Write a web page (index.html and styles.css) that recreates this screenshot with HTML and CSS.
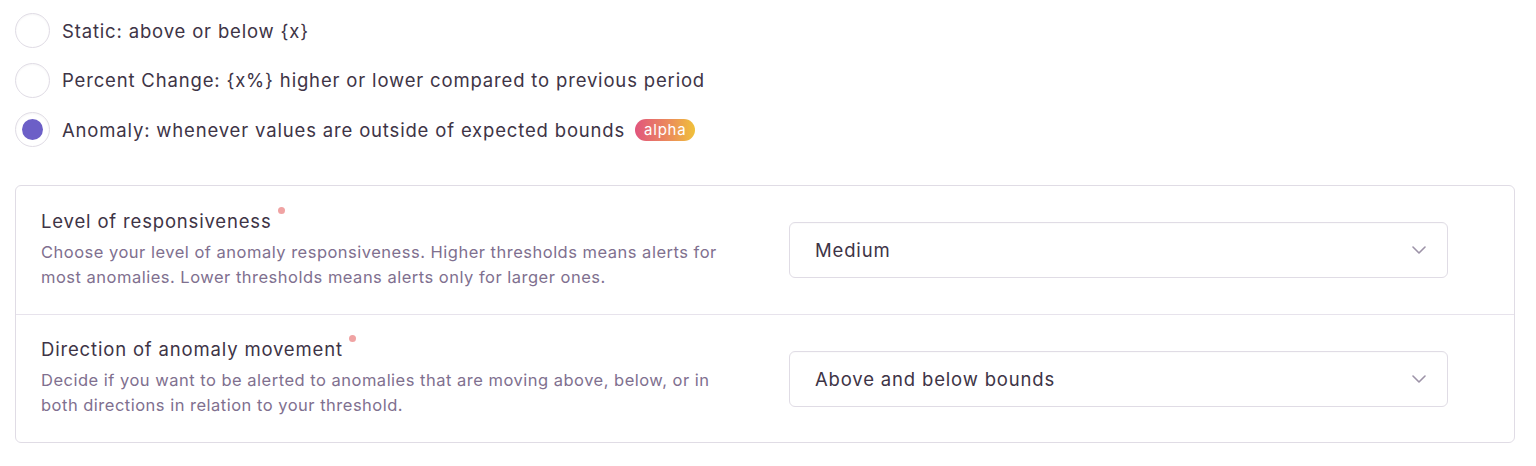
FILE: index.html
```html
<!DOCTYPE html>
<html>
<head>
<meta charset="utf-8">
<link rel="stylesheet" href="styles.css">
</head>
<body>
<div class="page">
  <div class="radios">
    <label class="radio-row">
      <span class="radio"></span>
      <span class="radio-label">Static: above or below {x}</span>
    </label>
    <label class="radio-row">
      <span class="radio"></span>
      <span class="radio-label">Percent Change: {x%} higher or lower compared to previous period</span>
    </label>
    <label class="radio-row">
      <span class="radio checked"><span class="dot"></span></span>
      <span class="radio-label">Anomaly: whenever values are outside of expected bounds</span>
      <span class="badge">alpha</span>
    </label>
  </div>

  <div class="panel">
    <div class="field">
      <div class="field-text">
        <div class="field-label">Level of responsiveness<span class="req"></span></div>
        <div class="field-help">Choose your level of anomaly responsiveness. Higher thresholds means alerts for most anomalies. Lower thresholds means alerts only for larger ones.</div>
      </div>
      <div class="select">
        <span class="select-value">Medium</span>
        <svg class="chevron" width="14" height="8" viewBox="0 0 14 8"><path d="M1 1 L7 7 L13 1" fill="none" stroke="#9d93a8" stroke-width="1.6" stroke-linecap="round" stroke-linejoin="round"/></svg>
      </div>
    </div>
    <div class="field">
      <div class="field-text">
        <div class="field-label">Direction of anomaly movement<span class="req"></span></div>
        <div class="field-help">Decide if you want to be alerted to anomalies that are moving above, below, or in both directions in relation to your threshold.</div>
      </div>
      <div class="select">
        <span class="select-value">Above and below bounds</span>
        <svg class="chevron" width="14" height="8" viewBox="0 0 14 8"><path d="M1 1 L7 7 L13 1" fill="none" stroke="#9d93a8" stroke-width="1.6" stroke-linecap="round" stroke-linejoin="round"/></svg>
      </div>
    </div>
  </div>
</div>
</body>
</html>
```

FILE: styles.css
```css
* { box-sizing: border-box; }
html, body { margin: 0; padding: 0; background: #fff; }
body {
  font-family: "Inter", "Open Sans", sans-serif;
  color: #3e3446;
}
.page {
  padding: 13px 21px 0 15px;
}
.radios {
  display: flex;
  flex-direction: column;
  gap: 14.5px;
}
.radio-row {
  display: flex;
  align-items: center;
  height: 35px;
}
.radio {
  width: 35px;
  height: 35px;
  border-radius: 50%;
  border: 1px solid #e0dce5;
  box-shadow: inset 0 1px 2px rgba(0,0,0,0.04);
  display: flex;
  align-items: center;
  justify-content: center;
  flex: none;
}
.dot {
  width: 21px;
  height: 21px;
  border-radius: 50%;
  background: #6c5fc7;
}
.radio-label {
  margin-left: 12px;
  font-size: 18.5px;
  letter-spacing: 0.045em;
  color: #3e3446;
}
.badge {
  margin-left: 10px;
  height: 22px;
  padding: 0 9px;
  border-radius: 11px;
  background: linear-gradient(90deg, #e1557d 0%, #eb8a5c 55%, #f0c13a 100%);
  color: #fff;
  font-size: 15px;
  letter-spacing: 0.05em;
  line-height: 22px;
}
.panel {
  margin-top: 38px;
  width: 1500px;
  border: 1px solid #e0dce5;
  border-radius: 6px;
}
.field {
  display: flex;
  align-items: center;
  height: 128px;
  padding: 0 25px;
}
.field + .field {
  border-top: 1px solid #e7e3ec;
}
.field-text {
  width: 748px;
  flex: none;
  padding-right: 53px;
}
.field-label {
  font-size: 18.5px;
  letter-spacing: 0.045em;
  color: #3e3446;
  line-height: 24px;
  position: relative;
  display: inline-block;
  top: -2px;
}
.req {
  position: absolute;
  right: -13px;
  top: -2px;
  width: 7px;
  height: 7px;
  border-radius: 50%;
  background: #f0a3a3;
}
.field-help {
  margin-top: 5px;
  font-size: 16.5px;
  letter-spacing: 0.03em;
  line-height: 25px;
  color: #80708f;
}
.select {
  width: 659px;
  height: 56px;
  border: 1px solid #e0dce5;
  border-radius: 6px;
  display: flex;
  align-items: center;
  justify-content: space-between;
  padding: 0 21px 0 25px;
  box-shadow: inset 0 1px 1px rgba(0,0,0,0.02);
}
.select-value {
  font-size: 18.5px;
  letter-spacing: 0.045em;
  color: #3e3446;
}
```
